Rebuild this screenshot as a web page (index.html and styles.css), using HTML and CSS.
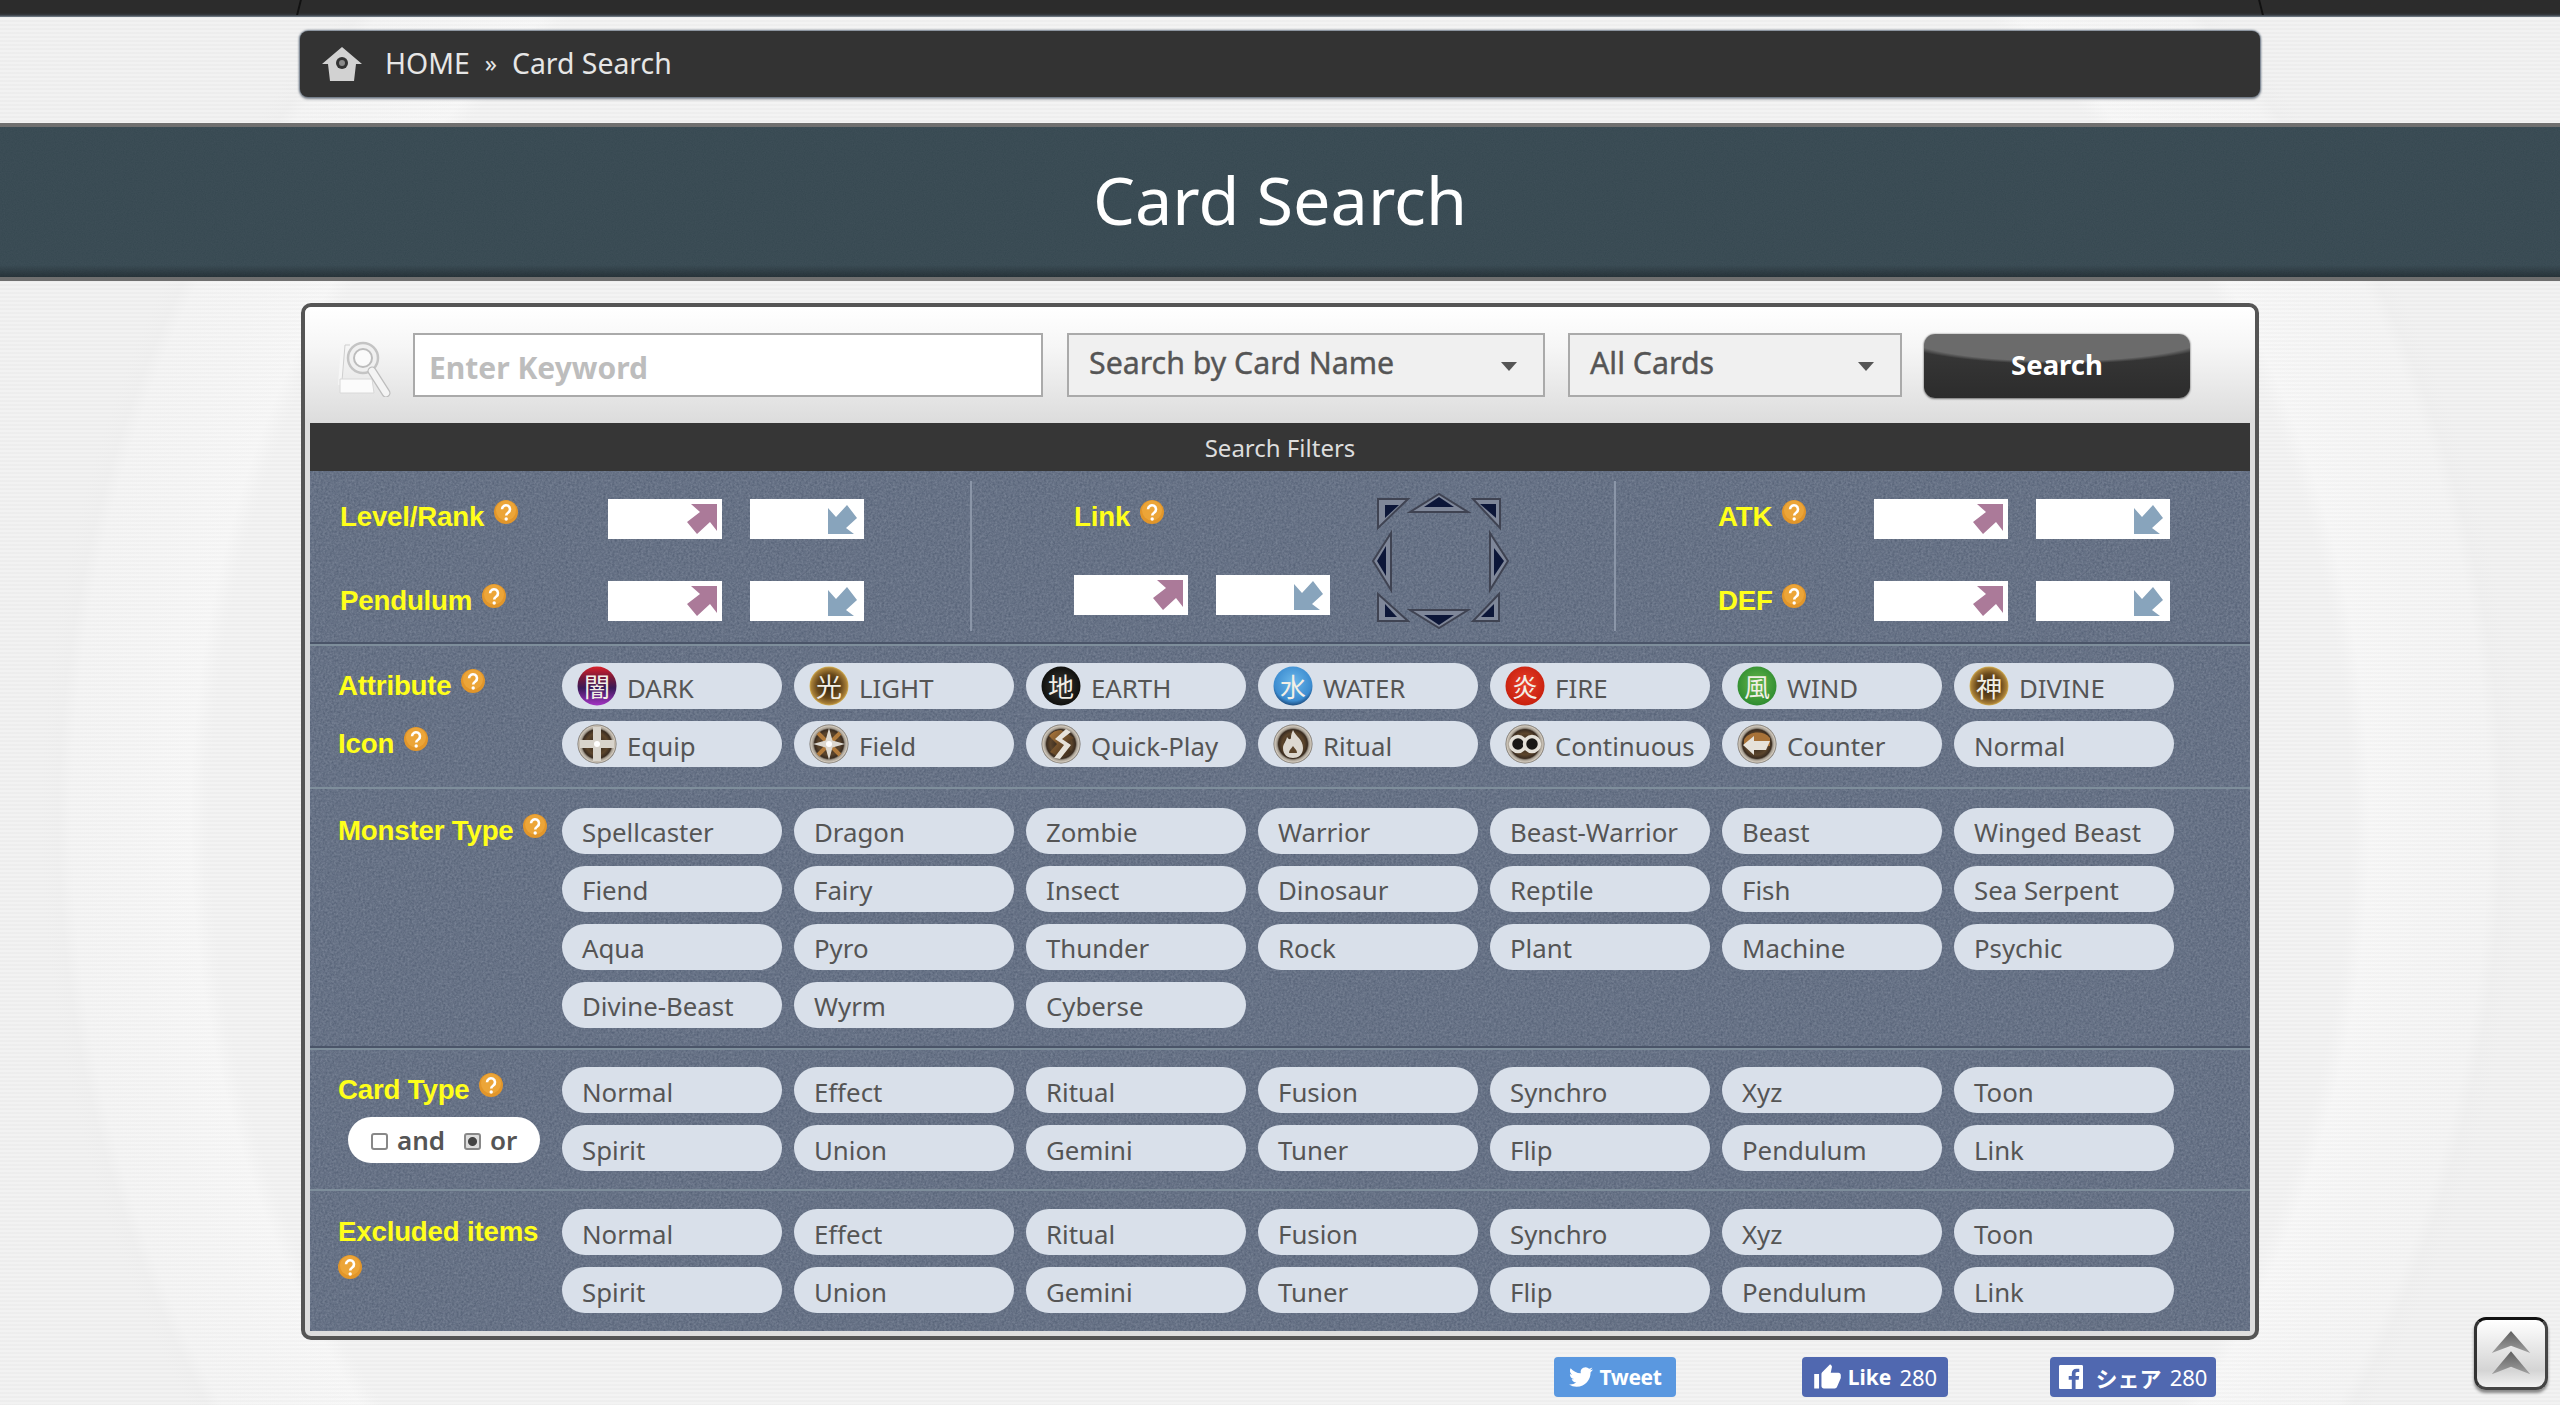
FILE: index.html
```html
<!DOCTYPE html>
<html lang="en">
<head>
<meta charset="utf-8">
<title>Card Search</title>
<link rel="stylesheet" href="styles.css">
</head>
<body>
<svg class="defs" width="0" height="0" aria-hidden="true">
  <defs>
    <linearGradient id="gDark2" x1="0" y1="0" x2="0" y2="1"><stop offset="0" stop-color="#d8202a"/><stop offset=".28" stop-color="#7a1838"/><stop offset=".55" stop-color="#3a1a58"/><stop offset="1" stop-color="#a434c4"/></linearGradient>
    <radialGradient id="gGold" cx="50%" cy="50%" r="52%"><stop offset="0" stop-color="#2a2010"/><stop offset=".6" stop-color="#6a4a1c"/><stop offset=".88" stop-color="#a98038"/><stop offset="1" stop-color="#e8c860"/></radialGradient>
    <radialGradient id="gEarth" cx="50%" cy="50%" r="55%"><stop offset="0" stop-color="#3a3a36"/><stop offset="1" stop-color="#0c0c0a"/></radialGradient>
    <radialGradient id="gWater" cx="50%" cy="40%" r="60%"><stop offset="0" stop-color="#6cb8ea"/><stop offset=".8" stop-color="#3c8cd0"/><stop offset="1" stop-color="#1c4c80"/></radialGradient>
    <radialGradient id="gFire" cx="50%" cy="45%" r="55%"><stop offset="0" stop-color="#e8402a"/><stop offset="1" stop-color="#c8200e"/></radialGradient>
    <radialGradient id="gWind" cx="50%" cy="45%" r="55%"><stop offset="0" stop-color="#6ab84c"/><stop offset="1" stop-color="#2e8c30"/></radialGradient>
    <radialGradient id="gSpell" cx="50%" cy="50%" r="50%"><stop offset="0" stop-color="#2a2018"/><stop offset=".55" stop-color="#5c452c"/><stop offset=".74" stop-color="#3a2c20"/><stop offset=".82" stop-color="#a49c90"/><stop offset=".93" stop-color="#d0c8bc"/><stop offset="1" stop-color="#6c665e"/></radialGradient>
    <linearGradient id="gTan" x1="0" y1="0" x2="1" y2="1"><stop offset="0" stop-color="#b07a3c"/><stop offset="1" stop-color="#2a2018"/></linearGradient>
    <symbol id="arrUp" viewBox="0 0 30 30"><polygon points="4,0 30,0 30,27 23,18 10,30 0,18 13,8" fill="#ab7a99"/></symbol>
    <symbol id="arrDown" viewBox="0 0 29 29"><polygon points="0,29 0,3 8,12 19,0 29,13 18,23 26,29" fill="#88a4bc"/></symbol>
    <symbol id="help" viewBox="0 0 24 24"><circle cx="12" cy="12" r="12" fill="#e2962a"/><circle cx="12" cy="10.500" r="10" fill="#eca538"/><path d="M8 9.200a4 4 0 1 1 6.300 3.300c-1.400 1-2.100 1.500-2.100 3" fill="none" stroke="#fff" stroke-width="2.600"/><circle cx="12.200" cy="19" r="1.700" fill="#fff"/></symbol>
    <symbol id="spellBase" viewBox="0 0 40 40"><circle cx="20" cy="20" r="19.500" fill="url(#gSpell)"/></symbol>
  </defs>
</svg>

<div class="topbar"></div>

<div class="crumbs">
  <svg class="home" viewBox="0 0 40 34"><polygon points="20,0 40,17 34,17 32,34 8,34 6,17 0,17" fill="#d2d2d2"/><circle cx="20" cy="16" r="6" fill="#333"/><circle cx="20" cy="16" r="3" fill="#8a8a8a"/></svg>
  <span class="crumb">HOME</span><span class="crumb-sep">»</span><span class="crumb">Card Search</span>
</div>

<h1 class="title">Card Search</h1>

<main class="panel">
  <div class="searchbar">
    <svg class="lens" viewBox="0 0 53 56">
      <path d="M12 4 L5 4 L2 44" fill="none" stroke="#f6f6f6" stroke-width="4"/>
      <path d="M12 4 L7 4 L4 40" fill="none" stroke="#cfcfcf" stroke-width="1"/>
      <polygon points="2,38 34,38 36,52 2,52" fill="#fbfbfb" stroke="#d8d8d8"/>
      <circle cx="25" cy="17" r="15" fill="#f0f0f0" stroke="#c4c4c4" stroke-width="2.500"/>
      <circle cx="25" cy="17" r="9" fill="#fafafa" stroke="#bcbcbc" stroke-width="2"/>
      <path d="M34 30 L48 52" stroke="#bdbdbd" stroke-width="9" stroke-linecap="round"/>
      <path d="M34 30 L48 52" stroke="#f4f4f4" stroke-width="6.500" stroke-linecap="round"/>
    </svg>
    <input class="keyword" type="text" placeholder="Enter Keyword">
    <div class="select sel-a"><span>Search by Card Name</span><i class="caret"></i></div>
    <div class="select sel-b"><span>All Cards</span><i class="caret"></i></div>
    <button class="go" type="button">Search</button>
  </div>

  <div class="filters-head">Search Filters</div>

  <div class="filters">
    <section class="stats">
      <div class="stat-col stat-level">
        <div class="stat-row"><span class="lab lab-w268">Level/Rank <svg class="q"><use href="#help"/></svg></span>
          <div class="num"><svg class="up"><use href="#arrUp"/></svg></div><div class="num"><svg class="down"><use href="#arrDown"/></svg></div></div>
        <div class="stat-row"><span class="lab lab-w268">Pendulum <svg class="q"><use href="#help"/></svg></span>
          <div class="num"><svg class="up"><use href="#arrUp"/></svg></div><div class="num"><svg class="down"><use href="#arrDown"/></svg></div></div>
      </div>
      <div class="stat-col stat-link">
        <div class="link-left">
          <span class="lab lab-link">Link <svg class="q"><use href="#help"/></svg></span>
          <div class="link-nums"><div class="num"><svg class="up"><use href="#arrUp"/></svg></div><div class="num"><svg class="down"><use href="#arrDown"/></svg></div></div>
        </div>
        <svg class="markers" viewBox="0 0 137 136">
          <g fill="#7f8799" stroke="#3f4352" stroke-width="2">
            <polygon points="6,6 36,6 6,35"/><polygon points="38,19 67,1 96,19"/><polygon points="101,6 128,6 128,35"/>
            <polygon points="19,40 1,68 19,97"/><polygon points="118,40 136,68 118,97"/>
            <polygon points="6,101 36,128 6,128"/><polygon points="38,117 96,117 67,135"/><polygon points="127,101 127,128 101,128"/>
          </g>
          <g fill="#0c1638">
            <polygon points="13,12 27,12 13,25"/><polygon points="52,14 67,4 82,14"/><polygon points="108,11 124,11 124,25"/>
            <polygon points="14,53 5,68 14,83"/><polygon points="122,55 132,68 122,83"/>
            <polygon points="13,111 25,124 13,124"/><polygon points="52,122 82,122 67,132"/><polygon points="122,111 122,124 109,124"/>
          </g>
        </svg>
      </div>
      <div class="stat-col stat-atk">
        <div class="stat-row"><span class="lab lab-w156">ATK <svg class="q"><use href="#help"/></svg></span>
          <div class="num wide"><svg class="up"><use href="#arrUp"/></svg></div><div class="num wide"><svg class="down"><use href="#arrDown"/></svg></div></div>
        <div class="stat-row"><span class="lab lab-w156">DEF <svg class="q"><use href="#help"/></svg></span>
          <div class="num wide"><svg class="up"><use href="#arrUp"/></svg></div><div class="num wide"><svg class="down"><use href="#arrDown"/></svg></div></div>
      </div>
    </section>

    <section class="frow attr">
      <div class="side">
        <div class="lab row-lab">Attribute <svg class="q"><use href="#help"/></svg></div>
        <div class="lab row-lab gap">Icon <svg class="q"><use href="#help"/></svg></div>
      </div>
      <div class="pills">
        <div class="pill has-ico"><svg class="ico" viewBox="0 0 40 40"><circle cx="20" cy="20" r="19.500" fill="url(#gDark2)"/><text x="20" y="30.500" class="kanji">闇</text></svg>DARK</div>
        <div class="pill has-ico"><svg class="ico" viewBox="0 0 40 40"><circle cx="20" cy="20" r="19.500" fill="url(#gGold)"/><text x="20" y="30.500" class="kanji">光</text></svg>LIGHT</div>
        <div class="pill has-ico"><svg class="ico" viewBox="0 0 40 40"><circle cx="20" cy="20" r="19.500" fill="url(#gEarth)"/><text x="20" y="30.500" class="kanji">地</text></svg>EARTH</div>
        <div class="pill has-ico"><svg class="ico" viewBox="0 0 40 40"><circle cx="20" cy="20" r="19.500" fill="url(#gWater)"/><text x="20" y="30.500" class="kanji">水</text></svg>WATER</div>
        <div class="pill has-ico"><svg class="ico" viewBox="0 0 40 40"><circle cx="20" cy="20" r="19.500" fill="url(#gFire)"/><text x="20" y="30.500" class="kanji">炎</text></svg>FIRE</div>
        <div class="pill has-ico"><svg class="ico" viewBox="0 0 40 40"><circle cx="20" cy="20" r="19.500" fill="url(#gWind)"/><text x="20" y="30.500" class="kanji">風</text></svg>WIND</div>
        <div class="pill has-ico"><svg class="ico" viewBox="0 0 40 40"><circle cx="20" cy="20" r="19.500" fill="url(#gGold)"/><text x="20" y="30.500" class="kanji">神</text></svg>DIVINE</div>

        <div class="pill has-ico"><svg class="ico" viewBox="0 0 40 40"><use href="#spellBase"/><path d="M16 3h8v13h13v8H24v13h-8V24H3v-8h13z" fill="#d8d4cc"/><circle cx="20" cy="20" r="3" fill="#fff"/></svg>Equip</div>
        <div class="pill has-ico"><svg class="ico" viewBox="0 0 40 40"><use href="#spellBase"/><path d="M9 9 L31 31 M31 9 L9 31" stroke="#b07a3c" stroke-width="4"/><path d="M20 4 L23.500 16.500 L36 20 L23.500 23.500 L20 36 L16.500 23.500 L4 20 L16.500 16.500 Z" fill="#dcd8d0"/><circle cx="20" cy="20" r="3" fill="#fff"/></svg>Field</div>
        <div class="pill has-ico"><svg class="ico" viewBox="0 0 40 40"><use href="#spellBase"/><path d="M8 12 C11 8 15 6 20 6 L33 14 L24 20 L31 28 L20 34 L9 28 L16 20 Z" fill="url(#gTan)"/><path d="M25 5 L14 15 L23 21 L13 34 L19 35 L30 21 L21 15 L30 8 Z" fill="#e6e2da"/></svg>Quick-Play</div>
        <div class="pill has-ico"><svg class="ico" viewBox="0 0 40 40"><use href="#spellBase"/><path d="M20 6 C23 13 30 15 30 24 C30 31 25 34 20 34 C15 34 10 31 10 24 C10 20 13 18 14 13 C16 16 18 16 18 13 C18 11 19 8 20 6Z" fill="#ddd8d0"/><path d="M20 22 C22 25 24 26 24 29 L16 29 C16 26 18 25 20 22Z" fill="#5c452c"/></svg>Ritual</div>
        <div class="pill has-ico"><svg class="ico" viewBox="0 0 40 40"><use href="#spellBase"/><circle cx="13" cy="20" r="7.500" fill="#1a1816" stroke="#e4e0d8" stroke-width="3.500"/><circle cx="27" cy="20" r="7.500" fill="#1a1816" stroke="#e4e0d8" stroke-width="3.500"/></svg>Continuous</div>
        <div class="pill has-ico"><svg class="ico" viewBox="0 0 40 40"><use href="#spellBase"/><path d="M7 16 C11 7 27 6 33 14 L33 22 L7 22Z" fill="#a87238"/><path d="M6 21 L17 12 L17 17 L33 17 L29 26 L17 26 L17 31 Z" fill="#e6e2da"/></svg>Counter</div>
        <div class="pill">Normal</div>
      </div>
    </section>

    <section class="frow monster">
      <div class="side"><div class="lab row-lab">Monster Type <svg class="q"><use href="#help"/></svg></div></div>
      <div class="pills">
        <div class="pill">Spellcaster</div><div class="pill">Dragon</div><div class="pill">Zombie</div><div class="pill">Warrior</div><div class="pill">Beast-Warrior</div><div class="pill">Beast</div><div class="pill">Winged Beast</div>
        <div class="pill">Fiend</div><div class="pill">Fairy</div><div class="pill">Insect</div><div class="pill">Dinosaur</div><div class="pill">Reptile</div><div class="pill">Fish</div><div class="pill">Sea Serpent</div>
        <div class="pill">Aqua</div><div class="pill">Pyro</div><div class="pill">Thunder</div><div class="pill">Rock</div><div class="pill">Plant</div><div class="pill">Machine</div><div class="pill">Psychic</div>
        <div class="pill">Divine-Beast</div><div class="pill">Wyrm</div><div class="pill">Cyberse</div>
      </div>
    </section>

    <section class="frow cardtype">
      <div class="side">
        <div class="lab row-lab">Card Type <svg class="q"><use href="#help"/></svg></div>
        <div class="andor"><i class="box"></i><span>and</span><i class="box on"></i><span>or</span></div>
      </div>
      <div class="pills">
        <div class="pill">Normal</div><div class="pill">Effect</div><div class="pill">Ritual</div><div class="pill">Fusion</div><div class="pill">Synchro</div><div class="pill">Xyz</div><div class="pill">Toon</div>
        <div class="pill">Spirit</div><div class="pill">Union</div><div class="pill">Gemini</div><div class="pill">Tuner</div><div class="pill">Flip</div><div class="pill">Pendulum</div><div class="pill">Link</div>
      </div>
    </section>

    <section class="frow excluded">
      <div class="side"><div class="lab wrap-lab">Excluded items <svg class="q"><use href="#help"/></svg></div></div>
      <div class="pills">
        <div class="pill">Normal</div><div class="pill">Effect</div><div class="pill">Ritual</div><div class="pill">Fusion</div><div class="pill">Synchro</div><div class="pill">Xyz</div><div class="pill">Toon</div>
        <div class="pill">Spirit</div><div class="pill">Union</div><div class="pill">Gemini</div><div class="pill">Tuner</div><div class="pill">Flip</div><div class="pill">Pendulum</div><div class="pill">Link</div>
      </div>
    </section>
  </div>
</main>

<div class="social">
  <a class="sns tw"><svg viewBox="0 0 24 24"><path d="M23.950 4.570a10 10 0 01-2.820.77 4.960 4.960 0 002.160-2.720c-.95.55-2 .96-3.120 1.190a4.920 4.920 0 00-8.380 4.480C7.690 8.090 4.070 6.130 1.640 3.160a4.820 4.820 0 00-.67 2.480c0 1.710.87 3.200 2.190 4.100a4.900 4.900 0 01-2.230-.62v.06c0 2.380 1.690 4.370 3.940 4.820a5 5 0 01-2.210.08 4.940 4.940 0 004.600 3.420A9.870 9.870 0 010 19.540a14 14 0 007.560 2.210c9.050 0 14-7.500 14-13.980 0-.21 0-.42-.02-.63a9.940 9.940 0 002.460-2.550z"/></svg><b>Tweet</b></a>
  <a class="sns like"><svg viewBox="0 0 24 24"><path d="M1 21h4V9H1v12zm22-11c0-1.100-.9-2-2-2h-6.310l.95-4.570.03-.32c0-.41-.17-.79-.44-1.060L14.170 1 7.590 7.590C7.220 7.950 7 8.450 7 9v10c0 1.100.9 2 2 2h9c.83 0 1.540-.5 1.840-1.220l3.020-7.050c.09-.23.14-.47.14-.73v-2z"/></svg><b>Like</b><span>280</span></a>
  <a class="sns share"><svg viewBox="0 0 24 24"><path d="M22.680 0H1.320C.59 0 0 .59 0 1.320v21.360C0 23.410.59 24 1.320 24h11.500v-9.300H9.700v-3.620h3.120V8.410c0-3.100 1.890-4.780 4.660-4.780 1.330 0 2.470.1 2.800.14v3.240h-1.920c-1.500 0-1.800.72-1.800 1.770v2.300h3.590l-.47 3.620h-3.120V24h6.120c.73 0 1.320-.59 1.320-1.320V1.320C24 .59 23.410 0 22.680 0z"/></svg><b>シェア</b><span>280</span></a>
</div>

<a class="totop"><svg viewBox="0 0 74 73">
  <path d="M37 12 L58 36 L37 28 L16 36 Z" fill="url(#gArrow)"/>
  <path d="M37 34 L58 59 L37 51 L16 59 Z" fill="url(#gArrow)"/>
  <defs><linearGradient id="gArrow" x1="0" y1="0" x2="0" y2="1"><stop offset="0" stop-color="#5f5f5f"/><stop offset="1" stop-color="#a0a0a0"/></linearGradient></defs>
</svg></a>
</body>
</html>
```
FILE: styles.css
```css
* { box-sizing: border-box; }
html, body { margin: 0; padding: 0; height: 1405px; overflow: hidden; }
body {
  position: relative;
  font-family: "Noto Sans", "Noto Sans CJK JP", sans-serif;
  color: #555;
  background-color: #f4f4f4;
  background-image:
    repeating-linear-gradient(180deg, rgba(0,0,0,.016) 0 2px, rgba(255,255,255,.08) 2px 4px),
    radial-gradient(circle 1500px at 50% 820px, #f2f2f2 0 1070px, #f3f3f3 1076px, #f7f7f7 1090px, #f5f5f5 1150px, #f4f4f4 1208px, #f0f0f0 1222px, #f1f1f1 1240px, #f1f1f1 100%);
}
.defs { position: absolute; }

.topbar {
  position: relative;
  height: 17px;
  background: linear-gradient(180deg, #2c2c2c 0 13px, #353a40 15px, #7b8792 17px);
}
.topbar::before, .topbar::after {
  content: "";
  position: absolute;
  top: 0;
  width: 2px;
  height: 15px;
  background: #111;
}
.topbar::before { left: 298px; transform: skewX(-14deg); }
.topbar::after { right: 298px; transform: skewX(14deg); }

.crumbs {
  display: flex;
  align-items: center;
  width: 1960px;
  height: 66px;
  margin: 14px auto 0;
  padding: 0 0 3px 22px;
  background: #333;
  border-radius: 8px;
  box-shadow: 0 0 2px 1px #6b7785, 0 2px 3px #8a8f96;
  color: #e6e6e6;
  font-size: 28.400px;
}
.home { width: 40px; height: 34px; margin: 3px 23px 0 0; }
.crumb-sep { margin: 0 15px; font-size: 24px; }

.title {
  height: 158px;
  margin: 26px 0 0;
  border-top: 4px solid #6f6f6f;
  border-bottom: 4px solid #6f6f6f;
  color: #fff;
  font-size: 66.500px;
  font-weight: 400;
  line-height: 145px;
  text-align: center;
  background-color: #354750;
  background-image:
    linear-gradient(180deg, transparent 0 138px, rgba(20,26,30,.5) 150px),
    url("data:image/svg+xml,%3Csvg xmlns='http://www.w3.org/2000/svg' width='300' height='150'%3E%3Cfilter id='n'%3E%3CfeTurbulence type='fractalNoise' baseFrequency='.9' numOctaves='2' stitchTiles='stitch'/%3E%3CfeColorMatrix values='0 0 0 0 1 0 0 0 0 1 0 0 0 0 1 0 0 0 .05 0'/%3E%3C/filter%3E%3Crect width='300' height='150' filter='url(%23n)'/%3E%3C/svg%3E");
}

.panel {
  width: 1958px;
  height: 1037px;
  margin: 22px auto 0;
  padding: 0 5px 5px;
  border: 4px solid #555;
  border-radius: 10px;
  background: #ddd;
}

.searchbar {
  display: flex;
  align-items: flex-start;
  height: 116px;
  margin: 0 -5px;
  padding: 26px 0 0 33px;
  background: linear-gradient(180deg, #fff 0, #f6f6f6 35%, #dcdcdc 100%);
  border-radius: 6px 6px 0 0;
}
.lens { width: 53px; height: 56px; margin: 8px 22px 0 0; }
.keyword, .select {
  height: 64px;
  border: 2px solid #aaa;
  font-family: inherit;
}
.keyword {
  width: 630px;
  padding: 5px 14px 0;
  background: #fff;
  color: #555;
  font-size: 30px;
  font-weight: 700;
  outline: none;
}
.keyword::placeholder { color: #bdbdbd; opacity: 1; }
.select {
  display: flex;
  align-items: center;
  justify-content: space-between;
  margin-left: 24px;
  padding: 0 26px 6px 20px;
  background: #f0f0f0;
  color: #555;
  font-size: 30.300px;
  -webkit-text-stroke: .4px #555;
}
.sel-a { width: 478px; }
.sel-b { width: 334px; margin-left: 23px; }
.caret {
  width: 0;
  height: 0;
  margin-top: 8px;
  border: 8px solid transparent;
  border-top: 9px solid #555;
  border-bottom: 0;
}
.go {
  position: relative;
  width: 266px;
  height: 64px;
  margin: 1px 0 0 22px;
  padding: 0 0 3px;
  border: 0;
  border-radius: 11px;
  overflow: hidden;
  background:
    radial-gradient(ellipse 170px 30px at 50% 0, #6b6b6b 0 90%, transparent 100%),
    linear-gradient(180deg, #3a3a3a, #2c2c2c);
  box-shadow: 0 0 2px #888, 0 1px 2px #777;
  color: #fff;
  font-family: inherit;
  font-size: 27.500px;
  font-weight: 700;
}

.filters-head {
  height: 48px;
  background: #363636;
  color: #ddd;
  font-size: 24px;
  line-height: 50px;
  text-align: center;
}

.filters {
  height: 860px;
  background-color: #556176;
  background-image: url("data:image/svg+xml,%3Csvg xmlns='http://www.w3.org/2000/svg' width='256' height='256'%3E%3Cfilter id='n'%3E%3CfeTurbulence type='fractalNoise' baseFrequency='.45' numOctaves='3' stitchTiles='stitch'/%3E%3CfeColorMatrix values='0 0 0 0 .82 0 0 0 0 .86 0 0 0 0 .95 0 0 0 .3 -.03'/%3E%3C/filter%3E%3Crect width='256' height='256' filter='url(%23n)'/%3E%3C/svg%3E");
}

.lab {
  color: #ffff1a;
  font-family: "Liberation Sans", sans-serif;
  font-size: 27.700px;
  font-weight: 700;
  letter-spacing: -.2px;
  white-space: nowrap;
}
.q {
  display: inline-block;
  width: 24px;
  height: 24px;
  margin-left: 2px;
  vertical-align: 2px;
}

.stats {
  display: flex;
  height: 173px;
  padding: 10px 0 13px;
}
.stat-col { height: 150px; padding-top: 18px; }
.stat-level { width: 660px; padding-left: 30px; }
.stat-link {
  display: flex;
  width: 644px;
  padding-left: 102px;
  border-left: 2px solid #8b96a8;
}
.stat-atk {
  flex: 1;
  padding-left: 102px;
  border-left: 2px solid #8b96a8;
}
.stat-row {
  display: flex;
  align-items: center;
  height: 40px;
  margin-bottom: 42px;
}
.lab-w268 { width: 268px; padding-bottom: 5px; }
.lab-w156 { width: 156px; padding-bottom: 5px; }
.stat-row + .stat-row .lab { padding-bottom: 2px; }
.num {
  display: flex;
  align-items: center;
  justify-content: flex-end;
  width: 114px;
  height: 40px;
  margin-right: 28px;
  padding-right: 5px;
  background: #fff;
}
.num.wide { width: 134px; }
.up { width: 30px; height: 30px; }
.down { width: 29px; height: 29px; margin-right: 2px; }
.link-left { width: 298px; }
.lab-link { display: block; height: 40px; line-height: 36px; }
.link-nums { display: flex; margin-top: 36px; }
.markers { width: 137px; height: 136px; margin-top: -6px; }

.frow {
  display: flex;
  border-top: 2px solid #7e8e9b;
}
.side { width: 252px; padding-left: 28px; }
.row-lab { height: 46px; line-height: 46px; }
.row-lab.gap { margin-top: 12px; }
.pills {
  display: grid;
  grid-template-columns: repeat(7, 220px);
  grid-auto-rows: 46px;
  gap: 12px;
  align-content: start;
}
.pill {
  display: flex;
  align-items: center;
  height: 46px;
  padding: 3px 0 0 20px;
  border-radius: 23px;
  background: #d9e0ea;
  color: #555;
  font-size: 25.800px;
  white-space: nowrap;
}
.monster .pill { padding-top: 2px; }
.pill.has-ico { padding-left: 15px; }
.ico { flex: none; width: 40px; height: 40px; margin: -3px 10px 0 0; }
.kanji {
  fill: #f2efe6;
  font-family: "Noto Sans CJK JP", sans-serif;
  font-size: 26px;
  text-anchor: middle;
}

.attr { height: 143px; padding-top: 17px; }
.monster { height: 261px; padding-top: 19px; }
.cardtype { height: 141px; padding-top: 17px; box-shadow: 0 -2px 0 #4a5468; }
.excluded { height: 142px; padding-top: 18px; }
.stats + .frow { box-shadow: 0 -2px 0 #4a5468; }

.andor {
  display: flex;
  align-items: center;
  width: 192px;
  height: 46px;
  margin: 4px 0 0 10px;
  padding-left: 23px;
  border-radius: 23px;
  background: #fff;
  color: #555;
  font-size: 26px;
  font-weight: 600;
}
.box {
  width: 17px;
  height: 17px;
  margin: 2px 9px 0 0;
  border: 2px solid #888;
  border-radius: 3px;
  background: #fff;
}
.box.on {
  margin-left: 19px;
  background: radial-gradient(circle, #444 0 4px, #ddd 5px);
}
.wrap-lab { width: 218px; padding-top: 6px; line-height: 34px; white-space: normal; }
.wrap-lab .q { margin-left: 0; vertical-align: -4px; }

.social {
  display: flex;
  margin: 17px 0 0 1554px;
}
.sns {
  display: flex;
  align-items: center;
  justify-content: center;
  height: 40px;
  border-radius: 4px;
  color: #fff;
  font-size: 22px;
}
.sns svg { width: 24px; height: 24px; margin-right: 7px; fill: #fff; }
.sns b { font-family: "Noto Sans", "Noto Sans CJK JP", sans-serif; font-weight: 700; }
.sns span { margin-left: 8px; }
.tw { width: 122px; margin-right: 126px; background: #5a98e0; }
.tw b { font-size: 21px; letter-spacing: -.4px; }
.like { width: 146px; margin-right: 102px; background: #5068b0; }
.like svg { width: 29px; height: 29px; margin-right: 6px; }
.like b { font-size: 21px; }
.share { width: 166px; background: #5068b0; }
.share svg { margin-right: 13px; }

.totop {
  position: absolute;
  left: 2474px;
  top: 1317px;
  width: 74px;
  height: 73px;
  border: 3px solid #222;
  border-color: #111 #444 #444 #333;
  border-radius: 12px;
  background: linear-gradient(180deg, #fff, #d4d4d4 75%, #f2f2f2);
  box-shadow: 0 3px 3px #888;
}
.totop svg { display: block; width: 100%; height: 100%; }
```
